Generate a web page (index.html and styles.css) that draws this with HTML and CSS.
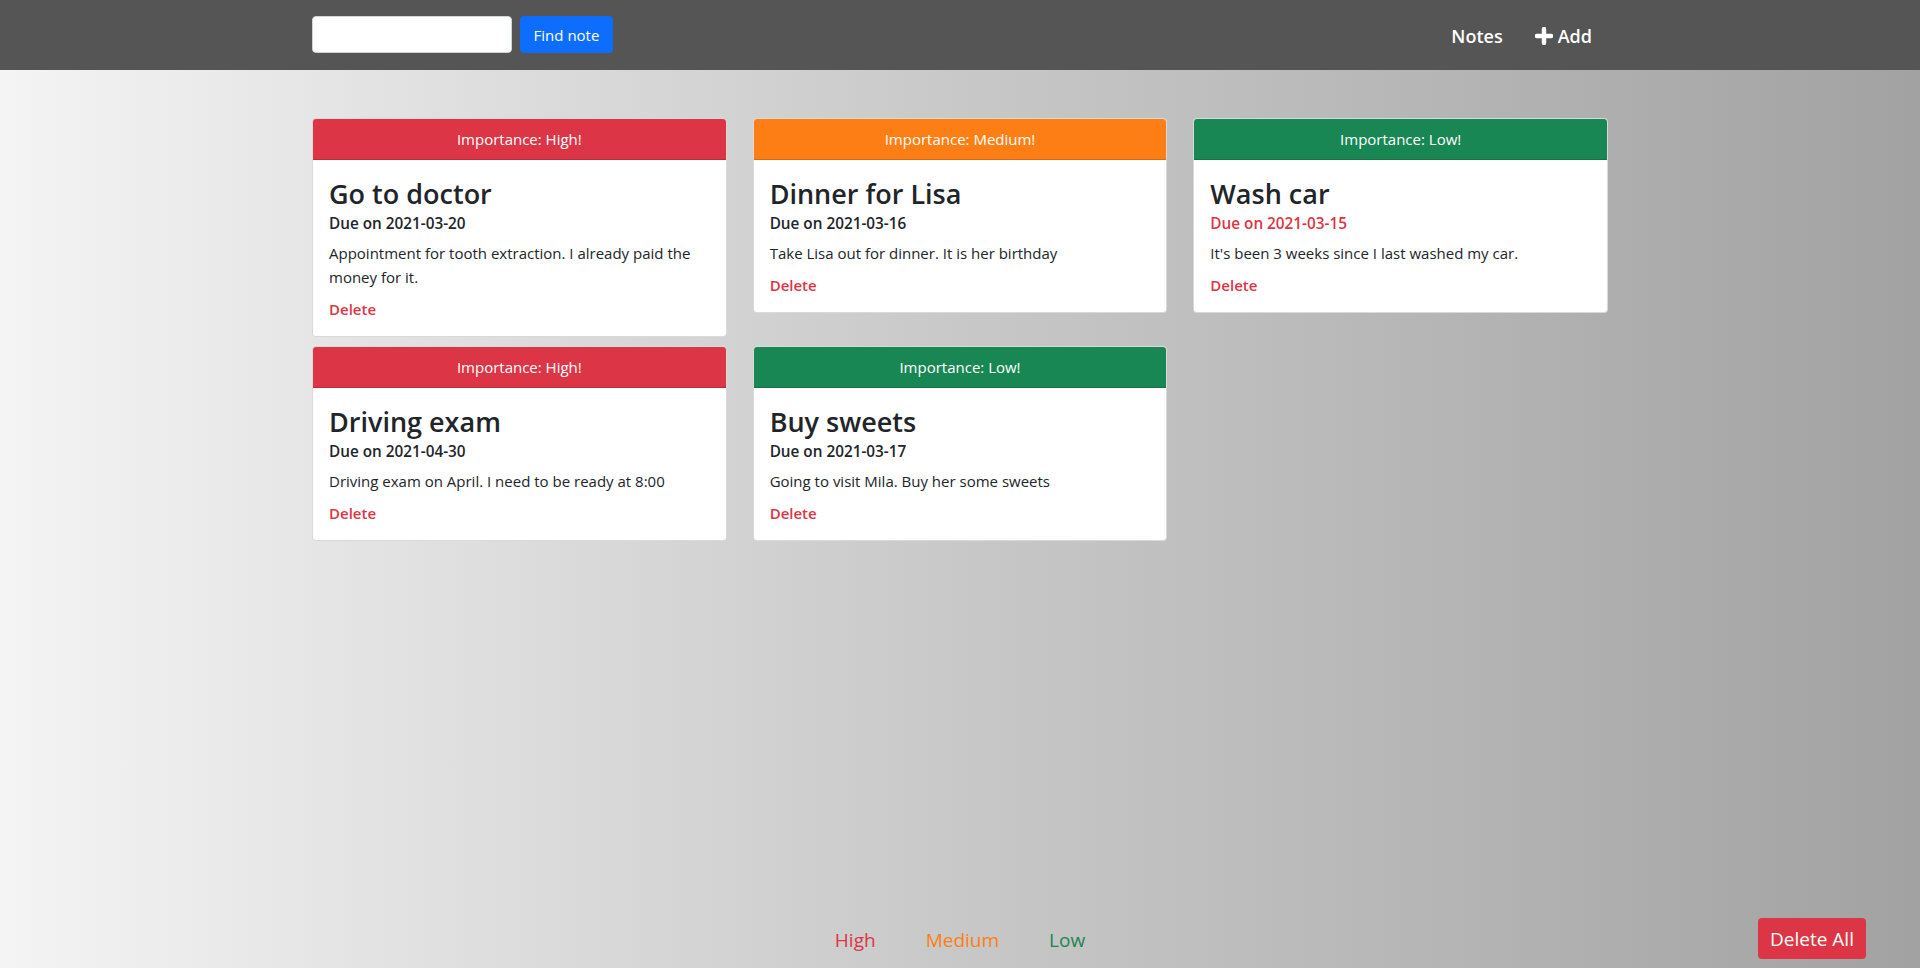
FILE: index.html
```html
<!DOCTYPE html>
<html lang="en">
<head>
<meta charset="utf-8">
<title>Notes</title>
<link rel="stylesheet" href="styles.css">
</head>
<body>
<div class="page">
  <nav class="navbar">
    <div class="container nav-inner">
      <form class="search">
        <input class="search-input" type="text" aria-label="Search">
        <button class="btn btn-blue" type="button">Find note</button>
      </form>
      <ul class="nav-links">
        <li><a class="nav-link" href="#">Notes</a></li>
        <li><a class="nav-link" href="#"><svg class="plus" viewBox="0 0 18 18" width="18" height="18"><path d="M9 2v14M2 9h14" stroke="#fff" stroke-width="4.4" stroke-linecap="round"/></svg>Add</a></li>
      </ul>
    </div>
  </nav>

  <main class="container main">
    <div class="cards">
      <div class="card">
        <div class="card-header bg-high">Importance: High!</div>
        <div class="card-body">
          <h3 class="card-title">Go to doctor</h3>
          <div class="due">Due on 2021-03-20</div>
          <p class="card-text">Appointment for tooth extraction. I already paid the money for it.</p>
          <a class="delete" href="#">Delete</a>
        </div>
      </div>
      <div class="card">
        <div class="card-header bg-medium">Importance: Medium!</div>
        <div class="card-body">
          <h3 class="card-title">Dinner for Lisa</h3>
          <div class="due">Due on 2021-03-16</div>
          <p class="card-text">Take Lisa out for dinner. It is her birthday</p>
          <a class="delete" href="#">Delete</a>
        </div>
      </div>
      <div class="card">
        <div class="card-header bg-low">Importance: Low!</div>
        <div class="card-body">
          <h3 class="card-title">Wash car</h3>
          <div class="due overdue">Due on 2021-03-15</div>
          <p class="card-text">It's been 3 weeks since I last washed my car.</p>
          <a class="delete" href="#">Delete</a>
        </div>
      </div>
      <div class="card">
        <div class="card-header bg-high">Importance: High!</div>
        <div class="card-body">
          <h3 class="card-title">Driving exam</h3>
          <div class="due">Due on 2021-04-30</div>
          <p class="card-text">Driving exam on April. I need to be ready at 8:00</p>
          <a class="delete" href="#">Delete</a>
        </div>
      </div>
      <div class="card">
        <div class="card-header bg-low">Importance: Low!</div>
        <div class="card-body">
          <h3 class="card-title">Buy sweets</h3>
          <div class="due">Due on 2021-03-17</div>
          <p class="card-text">Going to visit Mila. Buy her some sweets</p>
          <a class="delete" href="#">Delete</a>
        </div>
      </div>
    </div>
  </main>

  <footer class="footer">
    <div class="filters">
      <a class="filter f-high" href="#">High</a>
      <a class="filter f-medium" href="#">Medium</a>
      <a class="filter f-low" href="#">Low</a>
    </div>
    <button class="btn btn-red delete-all" type="button">Delete All</button>
  </footer>
</div>
</body>
</html>
```
FILE: styles.css
```css
* { box-sizing: border-box; }
html, body { margin: 0; padding: 0; height: 100%; }
body {
  font-family: "Open Sans", "Noto Sans", sans-serif;
  font-size: 15px;
  line-height: 1.5;
  color: #212529;
  background: linear-gradient(to right, #f4f4f4 0%, #c8c8c8 50%, #a2a2a2 100%);
}
.page {
  min-height: 100vh;
  display: flex;
  flex-direction: column;
}
.container {
  width: 1320px;
  margin: 0 auto;
  padding: 0 12px;
}
.navbar {
  background: #555555;
  height: 70px;
  flex: none;
}
.nav-inner {
  height: 100%;
  display: flex;
  align-items: center;
  justify-content: space-between;
}
.search { display: flex; gap: 8px; margin-top: -1px; }
.search-input {
  width: 200px;
  height: 37px;
  border: 1px solid #ced4da;
  border-radius: 4px;
  background: #fff;
  padding: 0 12px;
  font: inherit;
}
.btn {
  font-family: inherit;
  border: 1px solid transparent;
  border-radius: 4px;
  color: #fff;
  cursor: pointer;
}
.btn-blue {
  background: #0d6efd;
  height: 37px;
  width: 93px;
  font-size: 15px;
  padding: 0;
}
.nav-links {
  list-style: none;
  margin: 2px 0 0;
  padding: 0;
  display: flex;
}
.nav-link {
  display: flex;
  align-items: center;
  gap: 5px;
  padding: 8px 16px;
  color: #fff;
  text-decoration: none;
  font-size: 18px;
  font-weight: 600;
}
.plus { display: block; }

.main { flex: 1; padding-top: 48px; }
.cards {
  display: grid;
  grid-template-columns: repeat(3, 1fr);
  column-gap: 26px;
  row-gap: 9px;
  align-items: start;
}
.card {
  background: #fff;
  border: 1px solid rgba(0,0,0,.15);
  border-radius: 4px;
  overflow: hidden;
}
.card-header {
  height: 41px;
  line-height: 40px;
  border-bottom: 1px solid rgba(0,0,0,.15);
  color: #fff;
  text-align: center;
  font-size: 15px;
}
.bg-high { background: #dc3545; }
.bg-medium { background: #fd7e14; }
.bg-low { background: #198754; }
.card-body { padding: 17px 16px 15px; }
.card-title {
  margin: 0;
  font-size: 27px;
  font-weight: 600;
  line-height: 34px;
}
.due {
  font-size: 15.3px;
  font-weight: 600;
  line-height: 24px;
}
.overdue { color: #dc3545; }
.card-text {
  margin: 6px 0 8px;
  font-size: 15px;
  line-height: 24px;
}
.delete {
  display: block;
  color: #dc3545;
  font-weight: 600;
  font-size: 15px;
  line-height: 24px;
  text-decoration: none;
}

.footer {
  flex: none;
  display: grid;
  grid-template-columns: 1fr auto 1fr;
  align-items: center;
  padding: 0 54px 9px 54px;
}
.filters {
  grid-column: 2;
  display: flex;
  gap: 50px;
  padding-top: 4px;
}
.filter {
  font-size: 19px;
  font-weight: 500;
  text-decoration: none;
}
.f-high { color: #dc3545; }
.f-medium { color: #fd7e14; }
.f-low { color: #198754; }
.delete-all {
  grid-column: 3;
  justify-self: end;
  background: #dc3545;
  height: 41px;
  width: 108px;
  font-size: 19px;
  padding: 0;
}
```
